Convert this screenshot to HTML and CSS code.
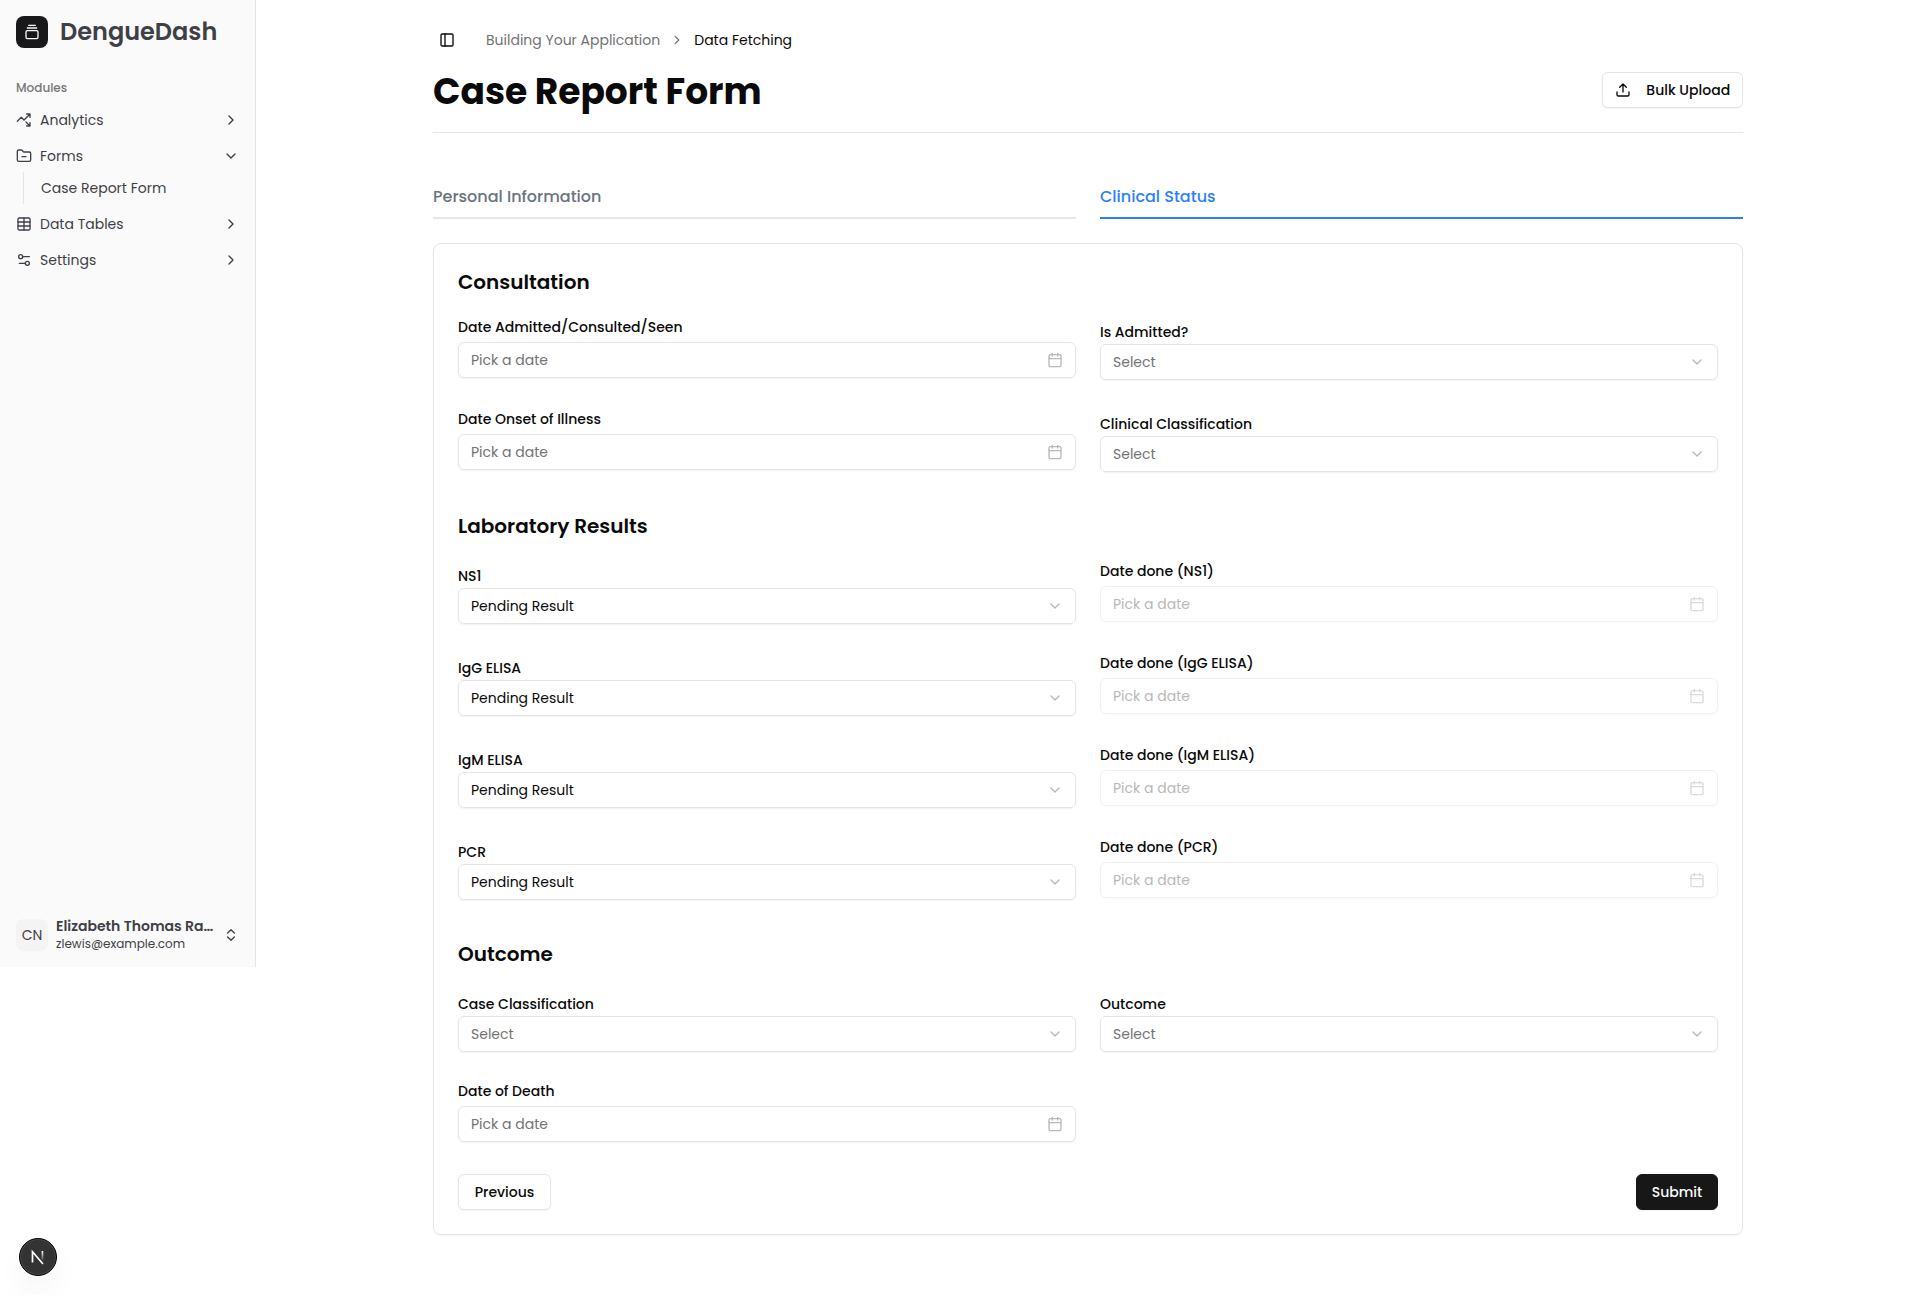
FILE: index.html
```html
<!DOCTYPE html>
<html lang="en">
<head>
<meta charset="utf-8">
<title>DengueDash</title>
<link rel="stylesheet" href="styles.css">
</head>
<body>
<svg class="sprite" width="0" height="0" aria-hidden="true">
  <symbol id="chevron-right" viewBox="0 0 24 24"><path d="m9 18 6-6-6-6"/></symbol>
  <symbol id="chevron-down" viewBox="0 0 24 24"><path d="m6 9 6 6 6-6"/></symbol>
  <symbol id="calendar" viewBox="0 0 24 24"><path d="M8 2v4M16 2v4M3 10h18"/><rect x="3" y="4" width="18" height="18" rx="2"/></symbol>
</svg>
<div class="layout">
  <aside class="sidebar">
    <div class="brand">
      <span class="brand-mark"><svg class="icon" viewBox="0 0 24 24"><path d="M7 2h10M5 6h14"/><rect x="3" y="10" width="18" height="12" rx="2"/></svg></span>
      <span class="brand-name">DengueDash</span>
    </div>
    <nav class="nav">
      <div class="nav-label">Modules</div>
      <a class="nav-item"><svg class="icon" viewBox="0 0 24 24"><path d="M14.828 14.828 21 21M21 16v5h-5M21 3l-9 9-4-4-6 6M21 8V3h-5"/></svg><span>Analytics</span><svg class="icon"><use href="#chevron-right"/></svg></a>
      <a class="nav-item open"><svg class="icon" viewBox="0 0 24 24"><path d="M9 13h6M20 20a2 2 0 0 0 2-2V8a2 2 0 0 0-2-2h-7.9a2 2 0 0 1-1.69-.9L9.6 3.9A2 2 0 0 0 7.93 3H4a2 2 0 0 0-2 2v13a2 2 0 0 0 2 2Z"/></svg><span>Forms</span><svg class="icon"><use href="#chevron-down"/></svg></a>
      <div class="nav-sub"><a>Case Report Form</a></div>
      <a class="nav-item"><svg class="icon" viewBox="0 0 24 24"><path d="M12 3v18M3 9h18M3 15h18"/><rect x="3" y="3" width="18" height="18" rx="2"/></svg><span>Data Tables</span><svg class="icon"><use href="#chevron-right"/></svg></a>
      <a class="nav-item"><svg class="icon" viewBox="0 0 24 24"><path d="M20 7h-9M14 17H5"/><circle cx="17" cy="17" r="3"/><circle cx="7" cy="7" r="3"/></svg><span>Settings</span><svg class="icon"><use href="#chevron-right"/></svg></a>
    </nav>
    <div class="user">
      <span class="avatar">CN</span>
      <span class="user-text"><strong>Elizabeth Thomas Ra…</strong><small>zlewis@example.com</small></span>
      <svg class="icon" viewBox="0 0 24 24"><path d="m7 15 5 5 5-5M7 9l5-5 5 5"/></svg>
    </div>
  </aside>

  <main class="main">
    <div class="topbar">
      <button class="panel-toggle"><svg class="icon" viewBox="0 0 24 24"><rect x="3" y="3" width="18" height="18" rx="2"/><path d="M9 3v18"/></svg></button>
      <span class="crumb">Building Your Application</span>
      <svg class="icon crumb-sep"><use href="#chevron-right"/></svg>
      <span class="crumb-current">Data Fetching</span>
    </div>
    <header class="page-head">
      <h1>Case Report Form</h1>
      <button class="btn upload"><svg class="icon" viewBox="0 0 24 24"><path d="M12 3v12M17 8l-5-5-5 5M21 15v4a2 2 0 0 1-2 2H5a2 2 0 0 1-2-2v-4"/></svg><span>Bulk Upload</span></button>
    </header>
    <div class="tabs">
      <div class="tab">Personal Information</div>
      <div class="tab active">Clinical Status</div>
    </div>
    <form class="card">
      <section>
        <h2>Consultation</h2>
        <div class="grid">
          <div class="field date"><label>Date Admitted/Consulted/Seen</label><div class="control"><span>Pick a date</span><svg class="icon"><use href="#calendar"/></svg></div></div>
          <div class="field"><label>Is Admitted?</label><div class="control"><span>Select</span><svg class="icon"><use href="#chevron-down"/></svg></div></div>
          <div class="field date"><label>Date Onset of Illness</label><div class="control"><span>Pick a date</span><svg class="icon"><use href="#calendar"/></svg></div></div>
          <div class="field"><label>Clinical Classification</label><div class="control"><span>Select</span><svg class="icon"><use href="#chevron-down"/></svg></div></div>
        </div>
      </section>
      <section>
        <h2>Laboratory Results</h2>
        <div class="grid">
          <div class="field"><label>NS1</label><div class="control filled"><span>Pending Result</span><svg class="icon"><use href="#chevron-down"/></svg></div></div>
          <div class="field date"><label>Date done (NS1)</label><div class="control disabled"><span>Pick a date</span><svg class="icon"><use href="#calendar"/></svg></div></div>
          <div class="field"><label>IgG ELISA</label><div class="control filled"><span>Pending Result</span><svg class="icon"><use href="#chevron-down"/></svg></div></div>
          <div class="field date"><label>Date done (IgG ELISA)</label><div class="control disabled"><span>Pick a date</span><svg class="icon"><use href="#calendar"/></svg></div></div>
          <div class="field"><label>IgM ELISA</label><div class="control filled"><span>Pending Result</span><svg class="icon"><use href="#chevron-down"/></svg></div></div>
          <div class="field date"><label>Date done (IgM ELISA)</label><div class="control disabled"><span>Pick a date</span><svg class="icon"><use href="#calendar"/></svg></div></div>
          <div class="field"><label>PCR</label><div class="control filled"><span>Pending Result</span><svg class="icon"><use href="#chevron-down"/></svg></div></div>
          <div class="field date"><label>Date done (PCR)</label><div class="control disabled"><span>Pick a date</span><svg class="icon"><use href="#calendar"/></svg></div></div>
        </div>
      </section>
      <section>
        <h2>Outcome</h2>
        <div class="grid">
          <div class="field"><label>Case Classification</label><div class="control"><span>Select</span><svg class="icon"><use href="#chevron-down"/></svg></div></div>
          <div class="field"><label>Outcome</label><div class="control"><span>Select</span><svg class="icon"><use href="#chevron-down"/></svg></div></div>
          <div class="field date"><label>Date of Death</label><div class="control"><span>Pick a date</span><svg class="icon"><use href="#calendar"/></svg></div></div>
        </div>
      </section>
      <div class="actions">
        <button class="btn previous" type="button">Previous</button>
        <button class="btn submit" type="button">Submit</button>
      </div>
    </form>
  </main>
</div>
<div class="dev-badge">
  <svg width="38" height="38" viewBox="0 0 38 38">
    <defs><linearGradient id="fade" x1="0" y1="0" x2="0" y2="1"><stop offset="0" stop-color="#fff"/><stop offset="1" stop-color="#fff" stop-opacity="0.1"/></linearGradient></defs>
    <path d="M13.5 24.5V13.8L24 26" fill="none" stroke="#fff" stroke-width="1.7"/>
    <rect x="22.6" y="13" width="1.7" height="9.5" fill="url(#fade)"/>
  </svg>
</div>
</body>
</html>
```

FILE: styles.css
```css
* { box-sizing: border-box; }
body {
  margin: 0;
  font-family: Poppins, Inter, "Open Sans", sans-serif;
  font-size: 14px;
  line-height: 20px;
  color: #0a0a0a;
  background: #fff;
}
button { font: inherit; color: inherit; }
.sprite { display: block; height: 0; }
.icon {
  width: 16px; height: 16px; flex: none;
  fill: none; stroke: currentColor; stroke-width: 2;
  stroke-linecap: round; stroke-linejoin: round;
}
.layout { display: flex; min-height: 1295px; }

.sidebar {
  width: 256px; height: 967px; flex: none;
  display: flex; flex-direction: column;
  background: #fafafa; border-right: 1px solid #e5e5e5; color: #3f3f46;
}
.brand { display: flex; align-items: center; gap: 12px; padding: 16px 16px 0; }
.brand-mark {
  width: 32px; height: 32px; border-radius: 8px; background: #18181b; color: #fafafa;
  display: flex; align-items: center; justify-content: center;
}
.brand-name { font-size: 24px; line-height: 32px; font-weight: 600; }
.nav { flex: 1; padding: 24px 16px 0; }
.nav-label { height: 32px; line-height: 32px; font-size: 12px; font-weight: 500; color: #777; }
.nav-item { display: flex; align-items: center; gap: 8px; height: 32px; margin-bottom: 4px; }
.nav-item.open { margin-bottom: 0; }
.nav-item span { flex: 1; }
.nav-sub { margin: 0 0 4px 7px; padding-left: 17px; height: 32px; line-height: 32px; border-left: 1px solid #e5e5e5; }
.user { display: flex; align-items: center; gap: 8px; height: 48px; padding: 0 16px; margin-bottom: 8px; }
.avatar {
  width: 32px; height: 32px; border-radius: 8px; background: #f4f4f5;
  display: flex; align-items: center; justify-content: center;
}
.user-text { flex: 1; display: flex; flex-direction: column; white-space: nowrap; }
.user-text strong { font-weight: 600; line-height: 17.5px; }
.user-text small { font-size: 12px; line-height: 16px; }

.main { width: 1310px; margin: 0 auto; padding-top: 26px; }
.topbar { display: flex; align-items: center; height: 28px; }
.panel-toggle {
  width: 28px; height: 28px; padding: 0; border: 0; background: none; margin-right: 25px;
  display: flex; align-items: center; justify-content: center;
}
.crumb { color: #737373; }
.crumb-sep { width: 14px; height: 14px; margin: 0 10px; color: #737373; }
.page-head {
  display: flex; justify-content: space-between; align-items: flex-start;
  height: 79px; padding-top: 18px; border-bottom: 1px solid #e5e5e5;
}
h1 { margin: 0; font-size: 36px; line-height: 40px; font-weight: 700; }
.btn {
  height: 36px; border: 1px solid #e5e5e5; border-radius: 6px; background: #fff; padding: 0;
  font-weight: 500; box-shadow: 0 1px 2px rgba(0, 0, 0, .05);
  display: flex; align-items: center; justify-content: center;
}
.upload { width: 141px; gap: 15.5px; white-space: nowrap; }
.tabs { display: grid; grid-template-columns: 1fr 1fr; gap: 24px; margin-top: 48px; }
.tab {
  height: 38px; padding-top: 4px; font-size: 16px; line-height: 24px; font-weight: 500;
  color: #6b7280; border-bottom: 2px solid #e5e7eb;
}
.tab.active { color: #2b7fff; border-color: #2b7fff; }

.card {
  margin-top: 24px; padding: 24px; border: 1px solid #e5e5e5; border-radius: 8px;
  box-shadow: 0 1px 2px rgba(0, 0, 0, .05);
}
section + section { margin-top: 36px; }
h2 { margin: 0 0 20px; font-size: 20px; line-height: 28px; font-weight: 600; }
.grid { display: grid; grid-template-columns: 1fr 1fr; gap: 24px; grid-auto-rows: 68px; }
.field { padding-top: 6px; display: flex; flex-direction: column; gap: 2px; }
.field.date { padding-top: 1px; gap: 5px; }
label { font-weight: 500; }
.control {
  height: 36px; padding: 0 12px; border: 1px solid #e5e5e5; border-radius: 6px;
  display: flex; align-items: center; justify-content: space-between;
  color: #737373; box-shadow: 0 1px 2px rgba(0, 0, 0, .05);
}
.control .icon { opacity: .5; }
.control.filled { color: #0a0a0a; }
.control.filled .icon { color: #737373; }
.control.disabled { opacity: .5; }
.actions { display: flex; justify-content: space-between; margin-top: 26px; }
.previous { width: 93px; }
.submit { width: 82px; background: #171717; border-color: #171717; color: #fafafa; }

.dev-badge {
  position: fixed; left: 19px; bottom: 19px; width: 38px; height: 38px; border-radius: 50%;
  background: #333; border: 1px solid #000; display: flex; align-items: center; justify-content: center;
  box-shadow: inset 0 0 0 1px #4a4a4a, 0 16px 32px -8px rgba(0, 0, 0, .12);
}
.dev-badge svg { flex: none; }
```
